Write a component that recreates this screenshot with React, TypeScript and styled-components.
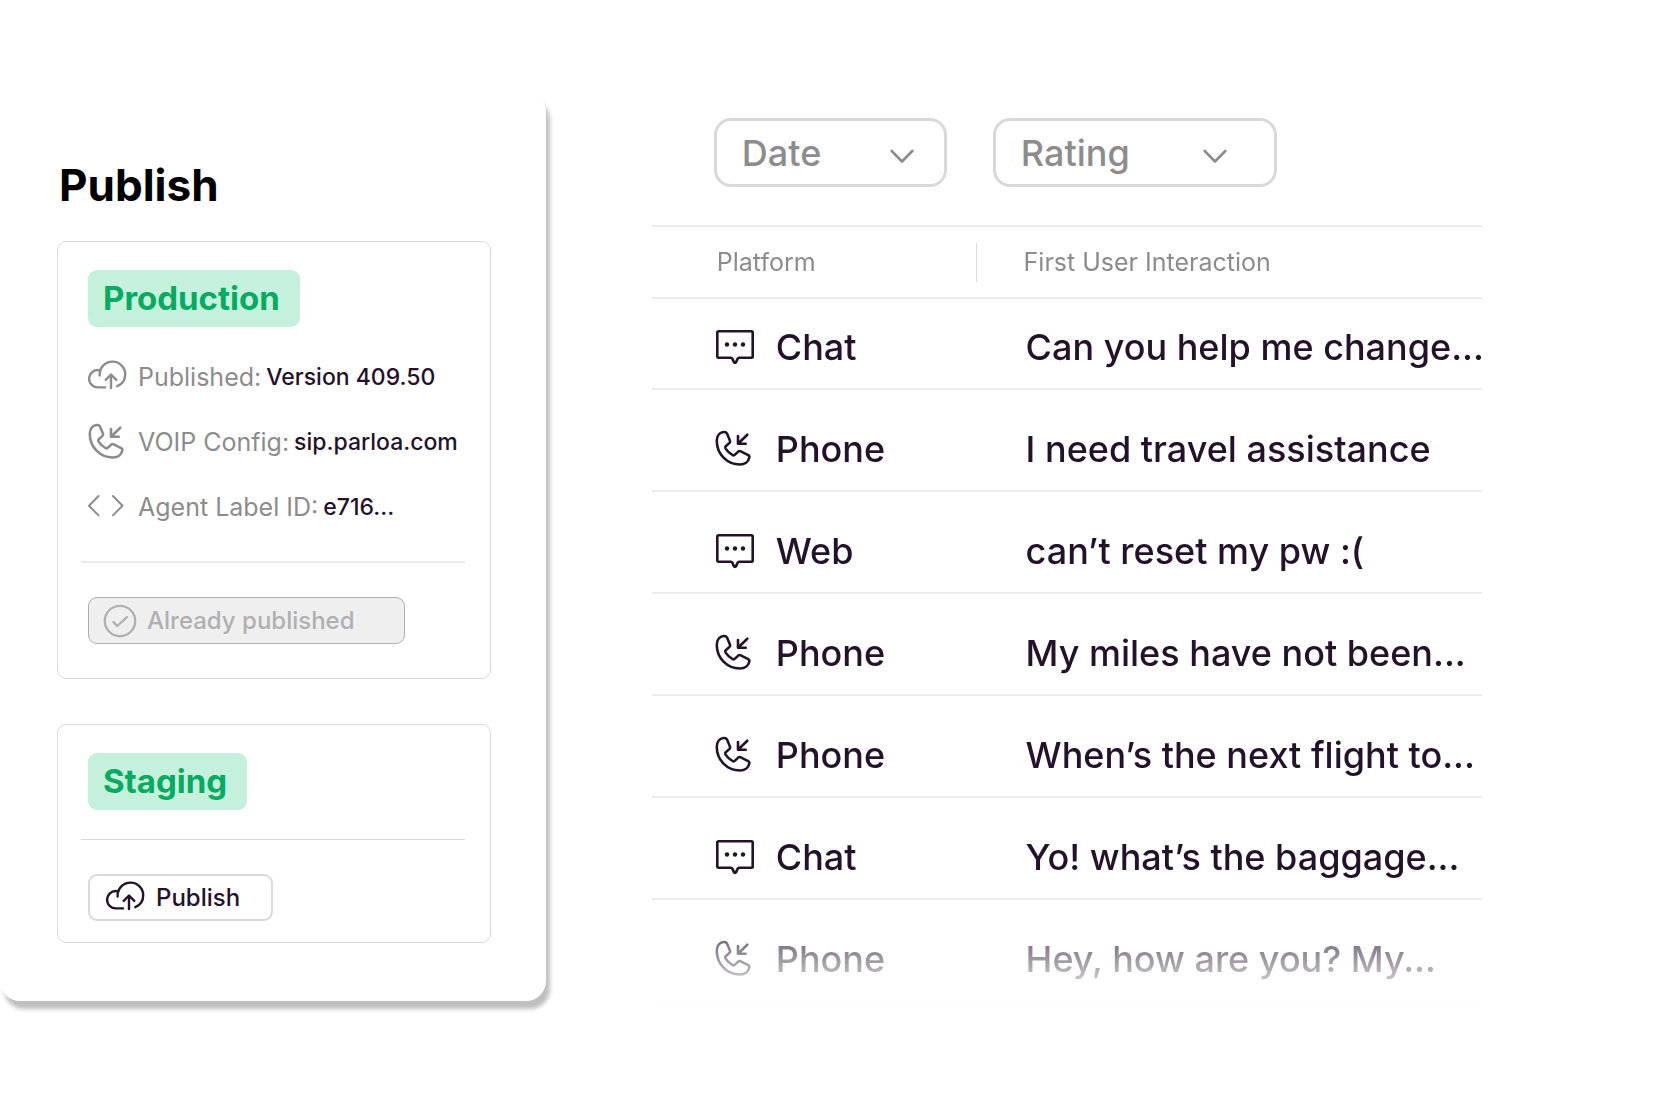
import React from 'react';
import styled, { createGlobalStyle } from 'styled-components';

const INK = '#24122b';
const MUTED = '#8c8c8c';
const LINE = '#ebebeb';
const OUTLINE = '#d9d9d9';

const GlobalStyle = createGlobalStyle`
  *, *::before, *::after { box-sizing: border-box; }
  body {
    margin: 0;
    background: #ffffff;
    color: ${INK};
    font-family: Inter, "Liberation Sans", sans-serif;
  }
`;

const Page = styled.div`
  display: flex;
  align-items: flex-start;
`;

const Panel = styled.aside`
  flex: 0 0 33%;
  margin: 92px 0;
  padding: 67px 55px 58px 57px;
  border-radius: 20px;
  background: #ffffff;
  box-shadow: 4px 8px 4px #bfbfbf;
`;

const Title = styled.h1`
  margin: 0 0 30px;
  padding-left: 2px;
  color: #000000;
  font-size: 44px;
  font-weight: 700;
  line-height: 52px;
`;

const Card = styled.section<{ $bottom: number }>`
  display: flex;
  flex-direction: column;
  align-items: flex-start;
  padding: 28px 25px ${(p) => p.$bottom}px 30px;
  border: 1px solid ${OUTLINE};
  border-radius: 9px;

  & + & {
    margin-top: 45px;
  }
`;

const Badge = styled.h2`
  margin: 0;
  padding: 0 20px 0 15px;
  border-radius: 9px;
  background: #c5f1dc;
  color: #05ab60;
  font-size: 33px;
  font-weight: 700;
  line-height: 57px;
`;

const InfoList = styled.dl`
  margin: 17px 0 0;
`;

const InfoRow = styled.div`
  display: flex;
  align-items: center;
  height: 65px;
  line-height: 30px;
  white-space: nowrap;

  svg {
    margin-right: 10px;
    color: ${MUTED};
  }

  dt {
    margin-right: 5px;
    color: ${MUTED};
    font-size: 25px;
  }

  dd {
    margin: 0;
    font-size: 23px;
    font-weight: 500;
  }
`;

const Divider = styled.hr<{ $weight: number; $color: string; $top: number }>`
  align-self: stretch;
  height: ${(p) => p.$weight}px;
  margin: ${(p) => p.$top}px 0 34px -7px;
  border: 0;
  background: ${(p) => p.$color};
`;

const Button = styled.button`
  display: inline-flex;
  align-items: center;
  gap: 10px;
  height: 47px;
  padding: 0 31px 0 16px;
  border: 2px solid ${OUTLINE};
  border-radius: 9px;
  background: #ffffff;
  color: ${INK};
  font-family: inherit;
  font-size: 24px;
  font-weight: 500;
  line-height: 29px;

  &:disabled {
    padding: 0 49px 0 14px;
    border: 1px solid #aeaeae;
    background: #efefef;
    color: #b0b0b0;
  }
`;

const Main = styled.main`
  flex: 1;
  min-width: 0;
  padding: 118px 172px 0 106px;
`;

const Filters = styled.div`
  display: flex;
  gap: 46px;
  margin: 0 0 38px;
  padding-left: 62px;
`;

const Filter = styled.label<{ $width: number; $inset: number }>`
  display: grid;
  align-items: center;
  width: ${(p) => p.$width}px;
  color: ${MUTED};

  select,
  svg {
    grid-area: 1 / 1;
  }

  svg {
    justify-self: end;
    margin-right: ${(p) => p.$inset}px;
    pointer-events: none;
  }
`;

const Select = styled.select`
  width: 100%;
  height: 69px;
  padding: 0 25px;
  border: 3px solid ${OUTLINE};
  border-radius: 17px;
  appearance: none;
  background: #ffffff;
  color: inherit;
  font-family: inherit;
  font-size: 36px;
  font-weight: 500;
`;

const Table = styled.table`
  width: 100%;
  border-collapse: separate;
  border-spacing: 0;
  table-layout: fixed;
  text-align: left;
  white-space: nowrap;
  mask-image: linear-gradient(#000 calc(100% - 103px), transparent calc(100% + 4px));
`;

const HeadCell = styled.th<{ $width?: string }>`
  width: ${(p) => p.$width ?? 'auto'};
  height: 74px;
  padding: 0 0 0 ${(p) => (p.$width ? 65 : 0)}px;
  border: 0 solid ${LINE};
  border-width: 2px 0;
  color: ${MUTED};
  font-size: 25px;
  font-weight: 400;
`;

const HeadLabel = styled.span`
  display: block;
  padding-left: 47px;
  border-left: 1px solid ${OUTLINE};
  line-height: 39px;
`;

const Row = styled.tr`
  height: 102px;

  &:first-child {
    height: 91px;
  }

  td {
    padding: 0 0 19px;
    border-bottom: 2px solid ${LINE};
    font-size: 36px;
    font-weight: 500;
    line-height: 44px;
    vertical-align: bottom;
  }

  td + td {
    padding-left: 50px;
  }
`;

const Platform = styled.div`
  display: grid;
  grid-template-columns: 40px 1fr;
  align-items: center;
  gap: 21px;
  padding-left: 63px;
`;

const CloudIcon = () => (
  <svg width="40" height="40" viewBox="0 0 40 40" fill="none" stroke="currentColor" strokeWidth="2.400" strokeLinecap="round" strokeLinejoin="round" aria-hidden="true">
    <path d="M11.6 18.5C11.2 10.8 17 4.6 24.6 4.6a12.6 12.6 0 0 1 12.6 12.6c0 5.4-3.200 9.900-7.900 12" />
    <path d="M17 30.400H9.800a8.700 8.700 0 0 1 0-17.400c1 0 1.800.1 2.500.4" />
    <path d="M23 31V18M17.700 22.800 23 17.500l5.300 5.300" />
  </svg>
);

const PhoneIcon = () => (
  <svg width="40" height="38" viewBox="0 0 40 38" fill="none" stroke="currentColor" strokeWidth="2.600" strokeLinecap="round" strokeLinejoin="round" aria-hidden="true">
    <path d="M8.500 2C4.500 2.500 1.800 6 1.800 11c0 13 10.200 23.500 23.200 23.500 5 0 8.500-3 9.300-7 .3-1.200-.1-1.900-1.100-2.400l-7.400-3.800c-1-.5-1.800-.4-2.600.3L20 24.600c-.8.8-1.600.9-2.500.4-3-1.800-5.500-4.200-6.900-6.400-.6-1-.5-1.700.2-2.400l3.700-3.300c.7-.7.8-1.500.4-2.400L12 3.600C11.400 2.300 10 1.800 8.500 2Z" />
    <path d="M32.300 4.700 23 13.700M23 6v7.700h7.700" />
  </svg>
);

const CodeIcon = () => (
  <svg width="40" height="40" viewBox="0 0 40 40" fill="none" stroke="currentColor" strokeWidth="2" strokeLinecap="round" strokeLinejoin="round" aria-hidden="true">
    <path d="M10.500 9 1 18.700l9.500 9.700M25 9l9.500 9.700-9.500 9.700" />
  </svg>
);

const CheckIcon = () => (
  <svg width="34" height="34" viewBox="0 0 34 34" fill="none" stroke="currentColor" strokeWidth="2.300" strokeLinecap="round" strokeLinejoin="round" aria-hidden="true">
    <circle cx="17" cy="17" r="15.200" />
    <path d="m10.500 18 3.700 4 9.800-8.800" />
  </svg>
);

const ChatIcon = () => (
  <svg width="40" height="36" viewBox="0 0 40 36" fill="none" stroke="currentColor" strokeWidth="2.600" strokeLinejoin="round" aria-hidden="true">
    <path d="M3.500 2.300h33a1.200 1.200 0 0 1 1.200 1.200v24a1.200 1.200 0 0 1-1.200 1.200H24c-.6 0-1 .3-1.300.9l-1.600 3.500c-.5 1-1.700 1-2.200 0l-1.600-3.500c-.3-.6-.7-.9-1.300-.9H3.500a1.200 1.200 0 0 1-1.200-1.200v-24a1.200 1.200 0 0 1 1.200-1.200Z" />
    <g fill="currentColor" stroke="none">
      <circle cx="12" cy="15.500" r="2.200" />
      <circle cx="20" cy="15.500" r="2.200" />
      <circle cx="28" cy="15.500" r="2.200" />
    </g>
  </svg>
);

const ChevronIcon = () => (
  <svg width="24" height="22" viewBox="0 0 24 22" fill="none" stroke="currentColor" strokeWidth="2.600" strokeLinecap="round" strokeLinejoin="round" aria-hidden="true">
    <path d="m1.700 9 10.300 10.500L22.300 9" />
  </svg>
);

const interactions = [
  { platform: 'Chat', text: 'Can you help me change...' },
  { platform: 'Phone', text: 'I need travel assistance' },
  { platform: 'Web', text: 'can’t reset my pw :(' },
  { platform: 'Phone', text: 'My miles have not been...' },
  { platform: 'Phone', text: 'When’s the next flight to...' },
  { platform: 'Chat', text: 'Yo! what’s the baggage...' },
  { platform: 'Phone', text: 'Hey, how are you? My...' },
];

export default function App() {
  return (
    <>
      <GlobalStyle />
      <Page>
        <Panel>
          <Title>Publish</Title>
          <Card $bottom={34}>
            <Badge>Production</Badge>
            <InfoList>
              <InfoRow>
                <CloudIcon />
                <dt>Published:</dt>
                <dd>Version 409.50</dd>
              </InfoRow>
              <InfoRow>
                <PhoneIcon />
                <dt>VOIP Config:</dt>
                <dd>sip.parloa.com</dd>
              </InfoRow>
              <InfoRow>
                <CodeIcon />
                <dt>Agent Label ID:</dt>
                <dd>e716...</dd>
              </InfoRow>
            </InfoList>
            <Divider $weight={2} $color={LINE} $top={22} />
            <Button disabled>
              <CheckIcon />
              Already published
            </Button>
          </Card>
          <Card $bottom={21}>
            <Badge>Staging</Badge>
            <Divider $weight={1} $color={OUTLINE} $top={29} />
            <Button>
              <CloudIcon />
              Publish
            </Button>
          </Card>
        </Panel>
        <Main>
          <Filters>
            <Filter $width={233} $inset={33}>
              <Select aria-label="Date">
                <option>Date</option>
              </Select>
              <ChevronIcon />
            </Filter>
            <Filter $width={284} $inset={50}>
              <Select aria-label="Rating">
                <option>Rating</option>
              </Select>
              <ChevronIcon />
            </Filter>
          </Filters>
          <Table>
            <thead>
              <tr>
                <HeadCell $width="39%">Platform</HeadCell>
                <HeadCell>
                  <HeadLabel>First User Interaction</HeadLabel>
                </HeadCell>
              </tr>
            </thead>
            <tbody>
              {interactions.map(({ platform, text }) => (
                <Row key={text}>
                  <td>
                    <Platform>
                      {platform === 'Phone' ? <PhoneIcon /> : <ChatIcon />}
                      {platform}
                    </Platform>
                  </td>
                  <td>{text}</td>
                </Row>
              ))}
            </tbody>
          </Table>
        </Main>
      </Page>
    </>
  );
}
